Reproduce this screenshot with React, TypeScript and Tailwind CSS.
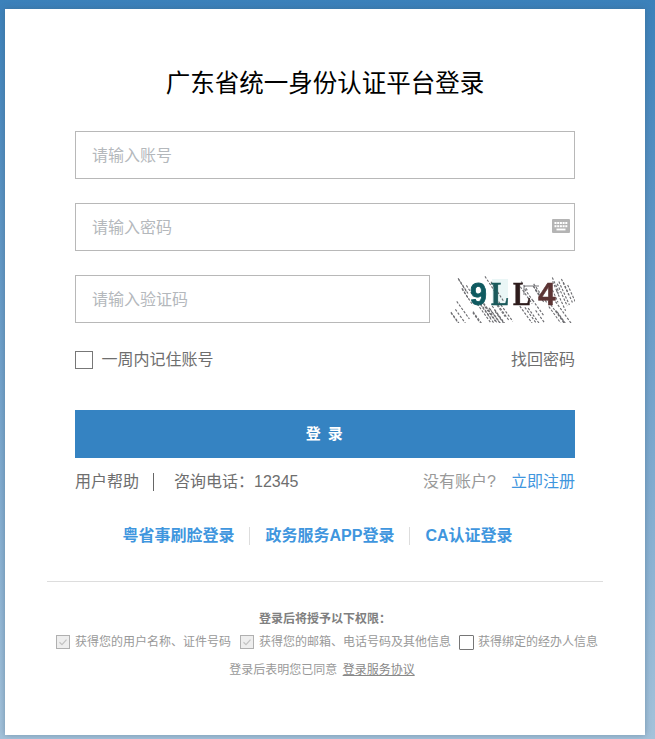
import React from "react";

const font = { fontFamily: '"Liberation Sans", "Noto Sans CJK SC", sans-serif' };

function Input({ placeholder, className, children }: { placeholder: string; className: string; children?: React.ReactNode }) {
  return (
    <div className={`relative h-12 border border-[#b8b8b8] bg-white flex items-center pl-[16px] pt-[2px] ${className}`}>
      <span className="text-[16px] text-[#b4b8bc]">{placeholder}</span>
      {children}
    </div>
  );
}

function Keyboard() {
  const keys: number[][] = [];
  for (let i = 0; i < 5; i++) keys.push([2.5 + i * 2.7, 3]);
  for (let i = 0; i < 5; i++) keys.push([2.5 + i * 2.7, 6.2]);
  return (
    <svg width="18" height="14" viewBox="0 0 18 14" className="absolute right-[4px] top-[15px]">
      <rect width="18" height="14" rx="1" fill="#b4b4b4" />
      {keys.map(([x, y], i) => (
        <rect key={i} x={x} y={y} width="2" height="2" fill="#ffffff" />
      ))}
      <rect x="4.5" y="9.6" width="9" height="1.8" fill="#ffffff" />
    </svg>
  );
}

function noiseLines() {
  const out: number[][] = [];
  let s = 17;
  const r = (n: number) => {
    s = (s * 9301 + 49297) % 233280;
    return (s / 233280) * n;
  };
  // band along the bottom
  for (let i = 0; i < 30; i++) {
    const x = r(125);
    const y = 24 + r(14);
    const l = 12 + r(14);
    out.push([x, y, x + l * 0.72, y + l]);
  }
  // sparse strokes upper left
  for (let i = 0; i < 7; i++) {
    const x = 12 + r(34);
    const y = r(14);
    const l = 10 + r(12);
    out.push([x, y, x + l * 0.65, y + l]);
  }
  // band on the right
  for (let i = 0; i < 9; i++) {
    const x = 106 + r(16);
    const y = r(18);
    const l = 12 + r(12);
    out.push([x, y, x + l * 0.45, y + l]);
  }
  // around the third and fourth glyphs
  for (let i = 0; i < 7; i++) {
    const x = 60 + r(32);
    const y = r(18);
    const l = 8 + r(12);
    out.push([x, y, x + l * 0.7, y + l]);
  }
  return out;
}

function Captcha() {
  const lines = noiseLines();
  const serif = "Liberation Serif";
  const sans = "Liberation Sans";
  return (
    <div className="relative w-[129px] h-12 overflow-hidden bg-white">
      <svg width="129" height="48" viewBox="0 0 129 48" className="absolute inset-0 blur-[0.4px]">
        <rect x="46" y="4" width="16" height="26" fill="#eaf6f6" />
        {lines.map(([a, b, c, d], i) => (
          <line key={i} x1={a} y1={b} x2={c} y2={d} stroke="#6c6c70" strokeWidth="1.1" strokeDasharray="2.5 1.5" />
        ))}
        <path d="M78 11 H93 M78 11 V20" stroke="#77777a" strokeWidth="1" fill="none" />
        <text transform="translate(24 30) scale(0.98 1)" fontSize="31" fontWeight="700" fill="#0f5a60" stroke="#0f5a60" strokeWidth="0.8" fontFamily={sans}>9</text>
        <text transform="translate(45 30) scale(0.82 1)" fontSize="33" fontWeight="700" fill="#1b5a5c" stroke="#1b5a5c" strokeWidth="0.5" fontFamily={serif}>L</text>
        <text transform="translate(67 30) scale(0.82 1)" fontSize="33" fontWeight="700" fill="#2e1c1c" stroke="#2e1c1c" strokeWidth="0.5" fontFamily={serif}>L</text>
        <text transform="translate(92 30) scale(1.02 1)" fontSize="31" fontWeight="700" fill="#5c3434" stroke="#5c3434" strokeWidth="0.5" fontFamily={sans}>4</text>
      </svg>
    </div>
  );
}

function Perm({ checked, label }: { checked: boolean; label: string }) {
  return (
    <span className="flex items-center">
      {checked ? (
        <span className="w-[14px] h-[14px] border border-[#b0b0b0] bg-[#eeeeee] flex items-center justify-center">
          <svg width="10" height="10" viewBox="0 0 10 10">
            <path d="M1.5 5.2 L4 7.6 L8.5 2.6" fill="none" stroke="#c2c2c2" strokeWidth="1.2" />
          </svg>
        </span>
      ) : (
        <span className="w-[15px] h-[15px] border border-[#767676] bg-white rounded-[1px]" />
      )}
      <span className={`${checked ? "ml-[5px]" : "ml-[4px]"} text-[12px] text-[#999999]`}>{label}</span>
    </span>
  );
}

export default function App() {
  return (
    <div style={font} className="h-[739px] w-[655px] pt-[9px] px-[5px] bg-gradient-to-b from-[#3b81ba] to-[#a4c2da]">
      <div className="h-[726px] w-[640px] bg-white flex flex-col items-stretch shadow-[0_0_6px_rgba(60,90,120,0.45)]">
        <h1 className="mt-[57px] h-9 leading-9 text-center text-[24.5px] text-black font-normal">广东省统一身份认证平台登录</h1>
        <div className="mt-[29px] mx-[70px] flex flex-col">
          <Input placeholder="请输入账号" className="w-[500px]" />
          <Input placeholder="请输入密码" className="w-[500px] mt-6">
            <Keyboard />
          </Input>
          <div className="mt-6 flex justify-between">
            <Input placeholder="请输入验证码" className="w-[355px]" />
            <Captcha />
          </div>
          <div className="mt-[25px] h-[24px] flex items-center justify-between text-[16px] text-[#6e6e6e]">
            <label className="flex items-center">
              <span className="w-[18px] h-[18px] border border-[#777777] bg-white" />
              <span className="ml-[8.5px]">一周内记住账号</span>
            </label>
            <span>找回密码</span>
          </div>
          <button className="mt-[38px] h-12 w-full bg-[#3583c2] text-white text-[15px] font-bold tracking-[1.5px]">登 录</button>
          <div className="mt-[12px] h-[24px] flex items-center justify-between text-[16px]">
            <div className="flex items-center text-[#6e6e6e]">
              <span>用户帮助</span>
              <span className="mx-[14px] w-px h-[18px] bg-[#666666]" />
              <span className="ml-[6px]">咨询电话：12345</span>
            </div>
            <div className="flex items-center">
              <span className="text-[#999999]">没有账户?</span>
              <span className="ml-[15px] text-[#3f96de]">立即注册</span>
            </div>
          </div>
          <div className="mt-[30px] h-6 pr-[15px] flex items-center justify-center text-[16px] font-bold text-[#3f96de]">
            <span>粤省事刷脸登录</span>
            <span className="mx-[15px] w-px h-[18px] bg-[#dddddd]" />
            <span>政务服务APP登录</span>
            <span className="mx-[15px] w-px h-[18px] bg-[#dddddd]" />
            <span>CA认证登录</span>
          </div>
        </div>
        <div className="mt-[33px] mx-[42px] h-px bg-[#dddddd]" />
        <div className="mt-[28px] text-center text-[12px] font-bold text-[#808080] leading-[18px]">登录后将授予以下权限：</div>
        <div className="mt-[4px] pl-[4px] h-[20px] flex items-center justify-center">
          <Perm checked label="获得您的用户名称、证件号码" />
          <span className="w-[9px]" />
          <Perm checked label="获得您的邮箱、电话号码及其他信息" />
          <span className="w-[8px]" />
          <Perm checked={false} label="获得绑定的经办人信息" />
        </div>
        <div className="mt-[9px] pr-[6px] text-center text-[12px] leading-[18px] text-[#999999]">
          登录后表明您已同意 <span className="ml-[2px] underline text-[#888888]">登录服务协议</span>
        </div>
      </div>
    </div>
  );
}
